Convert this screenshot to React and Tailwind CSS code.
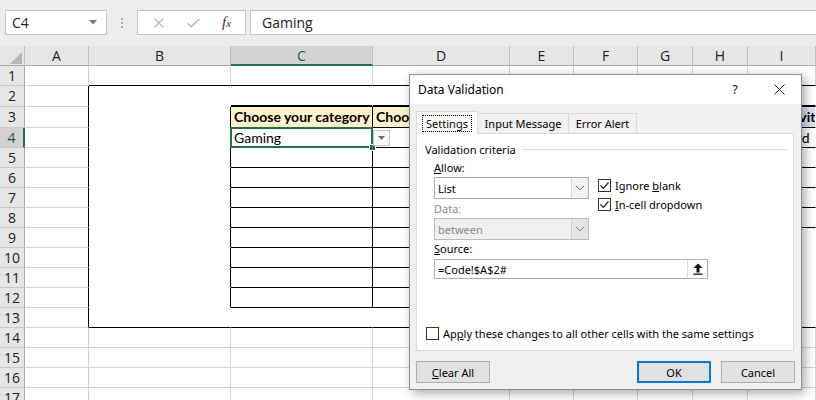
import React from "react";

const GRID = "grid grid-cols-[25px_64px_142px_142px_137px_64px_64px_55px_55px_68px]";
const LETTERS = ["A", "B", "C", "D", "E", "F", "G", "H", "I"];
const ROWS = Array.from({ length: 17 }, (_, i) => i + 1);

const rowHeight = (r) => (r === 2 || r === 3 ? "h-[21px]" : "h-[20px]");

// borders of one sheet cell (c: 1 = A ... 9 = I)
function cellBorders(r, c) {
  const inBox = r >= 2 && r <= 13 && c >= 2;
  let right = "border-r-[#d4d4d4]";
  if (c === 1 && r >= 2 && r <= 13) right = "border-r-black";
  else if (c >= 2 && c <= 4 && r >= 3 && r <= 12) right = "border-r-black";
  else if (inBox) right = "border-r-white";

  let bottom = "border-b border-b-[#d4d4d4]";
  if (r === 1 && c >= 2) bottom = "border-b border-b-black";
  else if (r === 2 && (c === 3 || c === 4 || c === 9)) bottom = "border-b-2 border-b-black";
  else if (r >= 3 && r <= 12 && (c === 3 || c === 4)) bottom = "border-b border-b-black";
  else if (r >= 3 && r <= 8 && c === 9) bottom = "border-b border-b-black";
  else if (r === 13 && c >= 2) bottom = "border-b border-b-black";
  else if (inBox) bottom = "border-b border-b-white";
  return `border-r ${right} ${bottom}`;
}

function cellFill(r, c) {
  if (r === 3 && (c === 3 || c === 4)) return "bg-[#fff2cc]";
  if (r === 3 && c === 9) return "bg-[#dae3f3]";
  return "bg-white";
}

const TEXT = {
  "3-3": { t: "Choose your category", bold: true },
  "3-4": { t: "Choose your subcategory", bold: true },
  "3-9": { t: "Activity", bold: true, pad: "pl-[26px]" },
  "4-3": { t: "Gaming" },
  "4-9": { t: "Board", pad: "pl-[25px]" },
};

function Check() {
  return (
    <span className="flex h-[13px] w-[13px] items-center justify-center border border-[#333] bg-white">
      <svg width="11" height="11" viewBox="0 0 11 11">
        <path d="M1.5 5.5l2.8 2.8L9.5 2.5" fill="none" stroke="#222" strokeWidth="1.2" />
      </svg>
    </span>
  );
}

function Chevron({ color = "#555" }) {
  return (
    <svg width="10" height="6" viewBox="0 0 10 6">
      <path d="M1 0.8l4 4 4-4" fill="none" stroke={color} strokeWidth="1" />
    </svg>
  );
}

function Dialog() {
  return (
    <div className="absolute left-[409px] top-[74px] flex h-[316px] w-[393px] flex-col border border-[#8e8e8e] bg-[#f0f0f0] font-['Noto_Sans',sans-serif] text-[11px] leading-[15px] text-black shadow-[3px_3px_10px_rgba(0,0,0,0.35)]">
      {/* title */}
      <div className="flex h-[29px] items-center bg-white pl-[8px] text-[12px]">
        <span className="flex-1">Data Validation</span>
        <span className="mr-[36px] text-[13px] text-[#222]">?</span>
        <svg className="mr-[16px]" width="11" height="11" viewBox="0 0 11 11">
          <path d="M0.5 0.5l10 10M10.5 0.5l-10 10" stroke="#222" strokeWidth="1" />
        </svg>
      </div>

      <div className="flex flex-1 flex-col pl-[6px] pr-[6px] pt-[7px]">
        {/* tabs */}
        <div className="flex h-[22px] items-end">
          <div className="relative z-10 -mb-px flex h-[23px] w-[62px] items-center justify-center border border-b-0 border-[#d9d9d9] bg-white">
            <span className="border border-dotted border-black px-[3px] leading-[15px]">Settings</span>
          </div>
          <div className="flex h-[20px] w-[91px] items-center justify-center border border-b-0 border-l-0 border-[#d9d9d9]">Input Message</div>
          <div className="flex h-[20px] w-[68px] items-center justify-center border border-b-0 border-l-0 border-[#d9d9d9]">Error Alert</div>
        </div>

        {/* panel */}
        <div className="flex h-[218px] w-[378px] flex-col border border-[#d9d9d9] bg-white">
          <div className="mt-[7px] flex h-[16px] items-center pl-[8px] pr-[6px]">
            <span>Validation criteria</span>
            <span className="ml-[6px] h-px flex-1 bg-[#dcdcdc]" />
          </div>

          <div className="flex gap-[9px] pl-[17px]">
            <div className="flex w-[155px] flex-col">
              <div className="mt-[3px] h-[16px] leading-[16px]"><u>A</u>llow:</div>
              <div className="mt-[1px] flex h-[22px] items-center border border-[#adadad] bg-white">
                <span className="flex-1 pl-[3px]">List</span>
                <span className="flex h-full w-[17px] items-center justify-center border-l border-[#dadada] bg-[#f4f4f4]">
                  <Chevron />
                </span>
              </div>
              <div className="mt-[2px] h-[16px] leading-[16px] text-[#8a8a8a]">Data:</div>
              <div className="mt-[1px] flex h-[22px] items-center border border-[#bcbcbc] bg-[#efefef] text-[#8a8a8a]">
                <span className="flex-1 pl-[3px]">between</span>
                <span className="flex h-full w-[17px] items-center justify-center border-l border-[#cfcfcf] bg-[#e5e5e5]">
                  <Chevron color="#7a7a7a" />
                </span>
              </div>
            </div>
            <div className="mt-[22px] flex flex-col gap-[6px]">
              <label className="flex h-[13px] items-center gap-[4px]">
                <Check />
                <span>Ignore <u>b</u>lank</span>
              </label>
              <label className="flex h-[13px] items-center gap-[4px]">
                <Check />
                <span><u>I</u>n-cell dropdown</span>
              </label>
            </div>
          </div>

          <div className="pl-[17px]">
            <div className="mt-[1px] h-[16px] leading-[16px]"><u>S</u>ource:</div>
            <div className="mt-[2px] flex h-[20px] w-[274px] items-center border border-[#adadad] bg-white">
              <span className="flex-1 pl-[3px]">=Code!$A$2#</span>
              <span className="flex h-full w-[20px] items-center justify-center border-l border-[#dadada]">
                <svg width="10" height="12" viewBox="0 0 10 12">
                  <path d="M5 0.5L9.5 5H6.5v4.5h-3V5H0.5z" fill="#111" />
                  <rect x="0.5" y="10.5" width="9" height="1.3" fill="#111" />
                </svg>
              </span>
            </div>
          </div>

          <label className="mb-[9px] mt-auto flex items-center gap-[4px] pl-[9px]">
            <span className="h-[13px] w-[13px] border border-[#333] bg-white" />
            <span>Ap<u>p</u>ly these changes to all other cells with the same settings</span>
          </label>
        </div>

        {/* buttons */}
        <div className="mt-[10px] flex h-[22px] items-center">
          <button className="h-[22px] w-[74px] border border-[#adadad] bg-[#e1e1e1]"><u>C</u>lear All</button>
          <button className="ml-auto h-[22px] w-[74px] border-2 border-[#0078d7] bg-[#e1e1e1]">OK</button>
          <button className="ml-[10px] h-[22px] w-[74px] border border-[#adadad] bg-[#e1e1e1]">Cancel</button>
        </div>
      </div>
    </div>
  );
}

export default function App() {
  return (
    <div className="relative h-[400px] w-[816px] overflow-hidden bg-white font-['Open_Sans',sans-serif]">
      {/* Formula bar */}
      <div className="flex h-[46px] items-start bg-[#ececec] pl-[5px] pt-[10px]">
        <div className="flex h-[25px] w-[102px] items-center justify-between border border-[#c6c6c6] bg-white pl-[6px] pr-[9px] text-[14px] text-[#222]">
          <span>C4</span>
          <svg width="8" height="5" viewBox="0 0 8 5">
            <path d="M0 0h8L4 4.5z" fill="#7a7a7a" />
          </svg>
        </div>
        <div className="flex h-[25px] w-[30px] flex-col items-center justify-center gap-[2px]">
          <span className="h-[2px] w-[2px] bg-[#b0b0b0]" />
          <span className="h-[2px] w-[2px] bg-[#b0b0b0]" />
          <span className="h-[2px] w-[2px] bg-[#b0b0b0]" />
        </div>
        <div className="flex h-[25px] w-[109px] items-center border border-[#c6c6c6] bg-white">
          <svg className="ml-[16px]" width="10" height="10" viewBox="0 0 10 10">
            <path d="M0.5 0.5l9 9M9.5 0.5l-9 9" stroke="#b4b4b4" strokeWidth="1.3" />
          </svg>
          <svg className="ml-[23px]" width="13" height="10" viewBox="0 0 13 10">
            <path d="M0.8 5.2l3.6 3.6L12.2 1" fill="none" stroke="#b4b4b4" strokeWidth="1.5" />
          </svg>
          <span className="ml-[22px] font-['Liberation_Serif',serif] text-[15px] italic text-[#333]">
            f<span className="text-[11px]">x</span>
          </span>
        </div>
        <div className="ml-[4px] flex h-[25px] flex-1 items-center border-y border-l border-[#c6c6c6] bg-white pl-[11px] text-[14px] text-[#222]">
          Gaming
        </div>
      </div>

      {/* Column headers */}
      <div className={`${GRID} h-[20px] border-b border-[#ababab] bg-[#e6e6e6] text-[14px] leading-[16px] text-[#222]`}>
        <div className="flex items-end justify-end border-r border-[#bdbdbd] pb-[2px] pr-[2px]">
          <svg width="12" height="12" viewBox="0 0 12 12">
            <path d="M12 0v12H0z" fill="#b5b5b5" />
          </svg>
        </div>
        {LETTERS.map((l) =>
          l === "C" ? (
            <div key={l} className="flex items-center justify-center border-b-2 border-r border-b-[#217346] border-r-[#bdbdbd] bg-[#d2d2d2] pt-[2px] text-[#1e5c38]">
              {l}
            </div>
          ) : (
            <div key={l} className="flex items-center justify-center border-r border-[#bdbdbd]">
              {l}
            </div>
          )
        )}
      </div>

      {/* Sheet */}
      {ROWS.map((r) => (
        <div key={r} className={`${GRID} ${rowHeight(r)} overflow-visible leading-[16px]`}>
          {r === 4 ? (
            <div className="flex min-h-0 items-center justify-center border-b border-r-2 border-b-[#c8c8c8] border-r-[#217346] bg-[#d2d2d2] text-[14px] text-[#1e5c38]">
              {r}
            </div>
          ) : (
            <div className="flex min-h-0 items-center justify-center border-b border-r border-b-[#c8c8c8] border-r-[#ababab] bg-[#e6e6e6] text-[14px] text-[#222]">
              {r}
            </div>
          )}
          {LETTERS.map((l, i) => {
            const c = i + 1;
            const txt = TEXT[`${r}-${c}`];
            const active = r === 4 && c === 3;
            return (
              <div
                key={l}
                className={`${cellBorders(r, c)} ${cellFill(r, c)} relative flex min-h-0 items-center whitespace-nowrap font-['Lato',sans-serif] text-[14px] text-black ${active ? "z-10" : "overflow-hidden"}`}
              >
                {txt && (
                  <span className={`${txt.pad || "pl-[3px]"} ${txt.bold ? "font-bold" : ""}`}>{txt.t}</span>
                )}
                {active && (
                  <>
                    <span className="pointer-events-none absolute -left-px -top-px bottom-[-1px] right-[-1px] border-2 border-[#217346]" />
                    <span className="absolute bottom-[-4px] right-[-4px] h-[7px] w-[7px] border border-white bg-[#217346]" />
                    <span className="absolute left-[calc(100%+1px)] top-[2px] flex h-[16px] w-[17px] items-center justify-center border border-[#c3c3c3] bg-[#f7f7f7]">
                      <svg width="7" height="4" viewBox="0 0 7 4">
                        <path d="M0 0h7L3.5 4z" fill="#6e6e6e" />
                      </svg>
                    </span>
                  </>
                )}
              </div>
            );
          })}
        </div>
      ))}

      <Dialog />
    </div>
  );
}
